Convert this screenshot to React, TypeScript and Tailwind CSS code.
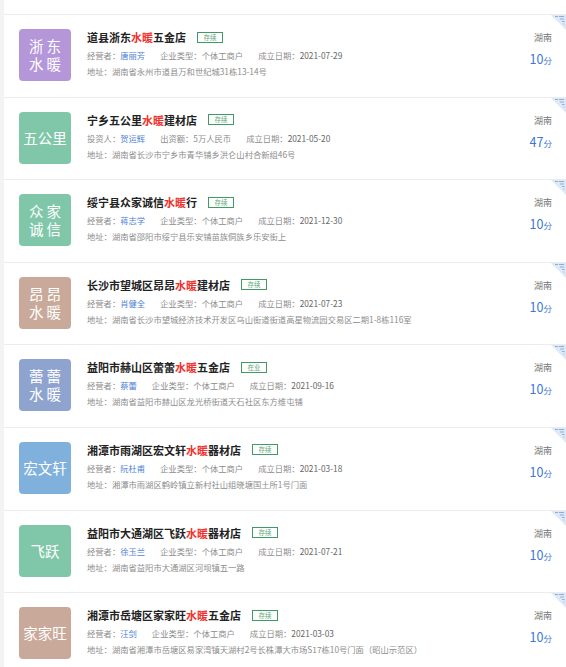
import React from 'react';

type Company = {
  logo: string[];
  color: string;
  pre: string;
  post: string;
  status: string;
  person: [string, string];
  mid: [string, string];
  date: string;
  address: string;
  score: string;
};

const companies: Company[] = [
  { logo: ['浙东', '水暖'], color: 'bg-[#b597d9]', pre: '道县浙东', post: '五金店', status: '存续', person: ['经营者', '唐丽芳'], mid: ['企业类型', '个体工商户'], date: '2021-07-29', address: '湖南省永州市道县万和世纪城31栋13-14号', score: '10' },
  { logo: ['五公里'], color: 'bg-[#80c7a9]', pre: '宁乡五公里', post: '建材店', status: '存续', person: ['投资人', '贺运辉'], mid: ['出资额', '5万人民币'], date: '2021-05-20', address: '湖南省长沙市宁乡市青华铺乡洪仑山村合新组46号', score: '47' },
  { logo: ['众家', '诚信'], color: 'bg-[#80c7a9]', pre: '绥宁县众家诚信', post: '行', status: '存续', person: ['经营者', '蒋志学'], mid: ['企业类型', '个体工商户'], date: '2021-12-30', address: '湖南省邵阳市绥宁县乐安铺苗族侗族乡乐安街上', score: '10' },
  { logo: ['昂昂', '水暖'], color: 'bg-[#c9a99a]', pre: '长沙市望城区昂昂', post: '建材店', status: '存续', person: ['经营者', '肖健全'], mid: ['企业类型', '个体工商户'], date: '2021-07-23', address: '湖南省长沙市望城经济技术开发区乌山街道街道高星物流园交易区二期1-8栋116室', score: '10' },
  { logo: ['蕾蕾', '水暖'], color: 'bg-[#8ea4cf]', pre: '益阳市赫山区蕾蕾', post: '五金店', status: '在业', person: ['经营者', '蔡蕾'], mid: ['企业类型', '个体工商户'], date: '2021-09-16', address: '湖南省益阳市赫山区龙光桥街道天石社区东方维屯铺', score: '10' },
  { logo: ['宏文轩'], color: 'bg-[#7fb1dc]', pre: '湘潭市雨湖区宏文轩', post: '器材店', status: '存续', person: ['经营者', '阮杜甫'], mid: ['企业类型', '个体工商户'], date: '2021-03-18', address: '湘潭市雨湖区鹤岭镇立新村社山组晓塘国土所1号门面', score: '10' },
  { logo: ['飞跃'], color: 'bg-[#80c7a9]', pre: '益阳市大通湖区飞跃', post: '器材店', status: '存续', person: ['经营者', '徐玉兰'], mid: ['企业类型', '个体工商户'], date: '2021-07-21', address: '湖南省益阳市大通湖区河坝镇五一路', score: '10' },
  { logo: ['家家旺'], color: 'bg-[#c9a99a]', pre: '湘潭市岳塘区家家旺', post: '五金店', status: '存续', person: ['经营者', '汪剑'], mid: ['企业类型', '个体工商户'], date: '2021-03-03', address: '湖南省湘潭市岳塘区易家湾镇天湖村2号长株潭大市场S17栋10号门面（昭山示范区）', score: '10' },
];

const Corner = () => (
  <svg className="absolute right-0 top-0" width="15" height="15" viewBox="0 0 15 15">
    <polygon points="0,0 15,0 15,15" fill="#dfe9f6" />
    <path d="M4 1.5h3M8 1.5h5M9 4h4M11 6.5h2.5M12.5 9h1" stroke="#8aaedc" strokeWidth="1" />
  </svg>
);

const Logo = ({ c }: { c: Company }) => (
  <div className={`w-[52px] h-[52px] rounded-[4px] ${c.color} flex items-center justify-center shrink-0 text-white text-center`}>
    {c.logo.length === 2 ? (
      <div className="text-[14.5px] leading-[18px] tracking-[3px] pl-[3px]">
        {c.logo[0]}
        <br />
        {c.logo[1]}
      </div>
    ) : (
      <div className="text-[14.5px] leading-[18px]">{c.logo[0]}</div>
    )}
  </div>
);

const Row = ({ c }: { c: Company }) => (
  <div className="relative h-[82.6px] border-t border-[#ececec] bg-white flex items-start pt-[14px] pl-[15px] pr-[14px]">
    <Corner />
    <Logo c={c} />
    <div className="ml-[16px] flex-1 min-w-0">
      <div className="flex items-center mt-[1px] h-[14px]">
        <span className="text-[11px] font-bold text-[#222] leading-[14px]">
          {c.pre}
          <span className="text-[#f0312c]">水暖</span>
          {c.post}
        </span>
        <span className="ml-[11px] border border-[#3f9a64] text-[#5aa874] text-[6.5px] leading-[9px] h-[11px] w-[26px] flex items-center justify-center">
          {c.status}
        </span>
      </div>
      <div className="mt-[5px] text-[8.3px] leading-[12px] text-[#8d8d8d] flex whitespace-nowrap">
        <span className="mr-[15px]">
          {c.person[0]}：<span className="text-[#4f7fd6]">{c.person[1]}</span>
        </span>
        <span className="mr-[15px]">
          {c.mid[0]}：{c.mid[1]}
        </span>
        <span>
          成立日期：<span className="text-[#666]">{c.date}</span>
        </span>
      </div>
      <div className="mt-[4px] text-[8.3px] leading-[12px] text-[#8d8d8d] whitespace-nowrap">地址：{c.address}</div>
    </div>
    <div className="flex flex-col items-end mt-[3px] w-[30px] shrink-0">
      <div className="text-[9px] leading-[12px] text-[#777]">湖南</div>
      <div className="mt-[6px] leading-[14px] text-[#3d76d9]">
        <span className="text-[12.5px]">{c.score}</span>
        <span className="text-[8.5px]">分</span>
      </div>
    </div>
  </div>
);

export default function App() {
  return (
    <div className="w-[566px] h-[667px] overflow-hidden bg-[#f3f3f3] pl-[4px] font-['Noto_Sans_CJK_SC','Noto_Sans',sans-serif]">
      <div className="bg-white">
        <div className="h-[14px] bg-white" />
        {companies.map((c) => (
          <Row key={c.pre} c={c} />
        ))}
      </div>
    </div>
  );
}
